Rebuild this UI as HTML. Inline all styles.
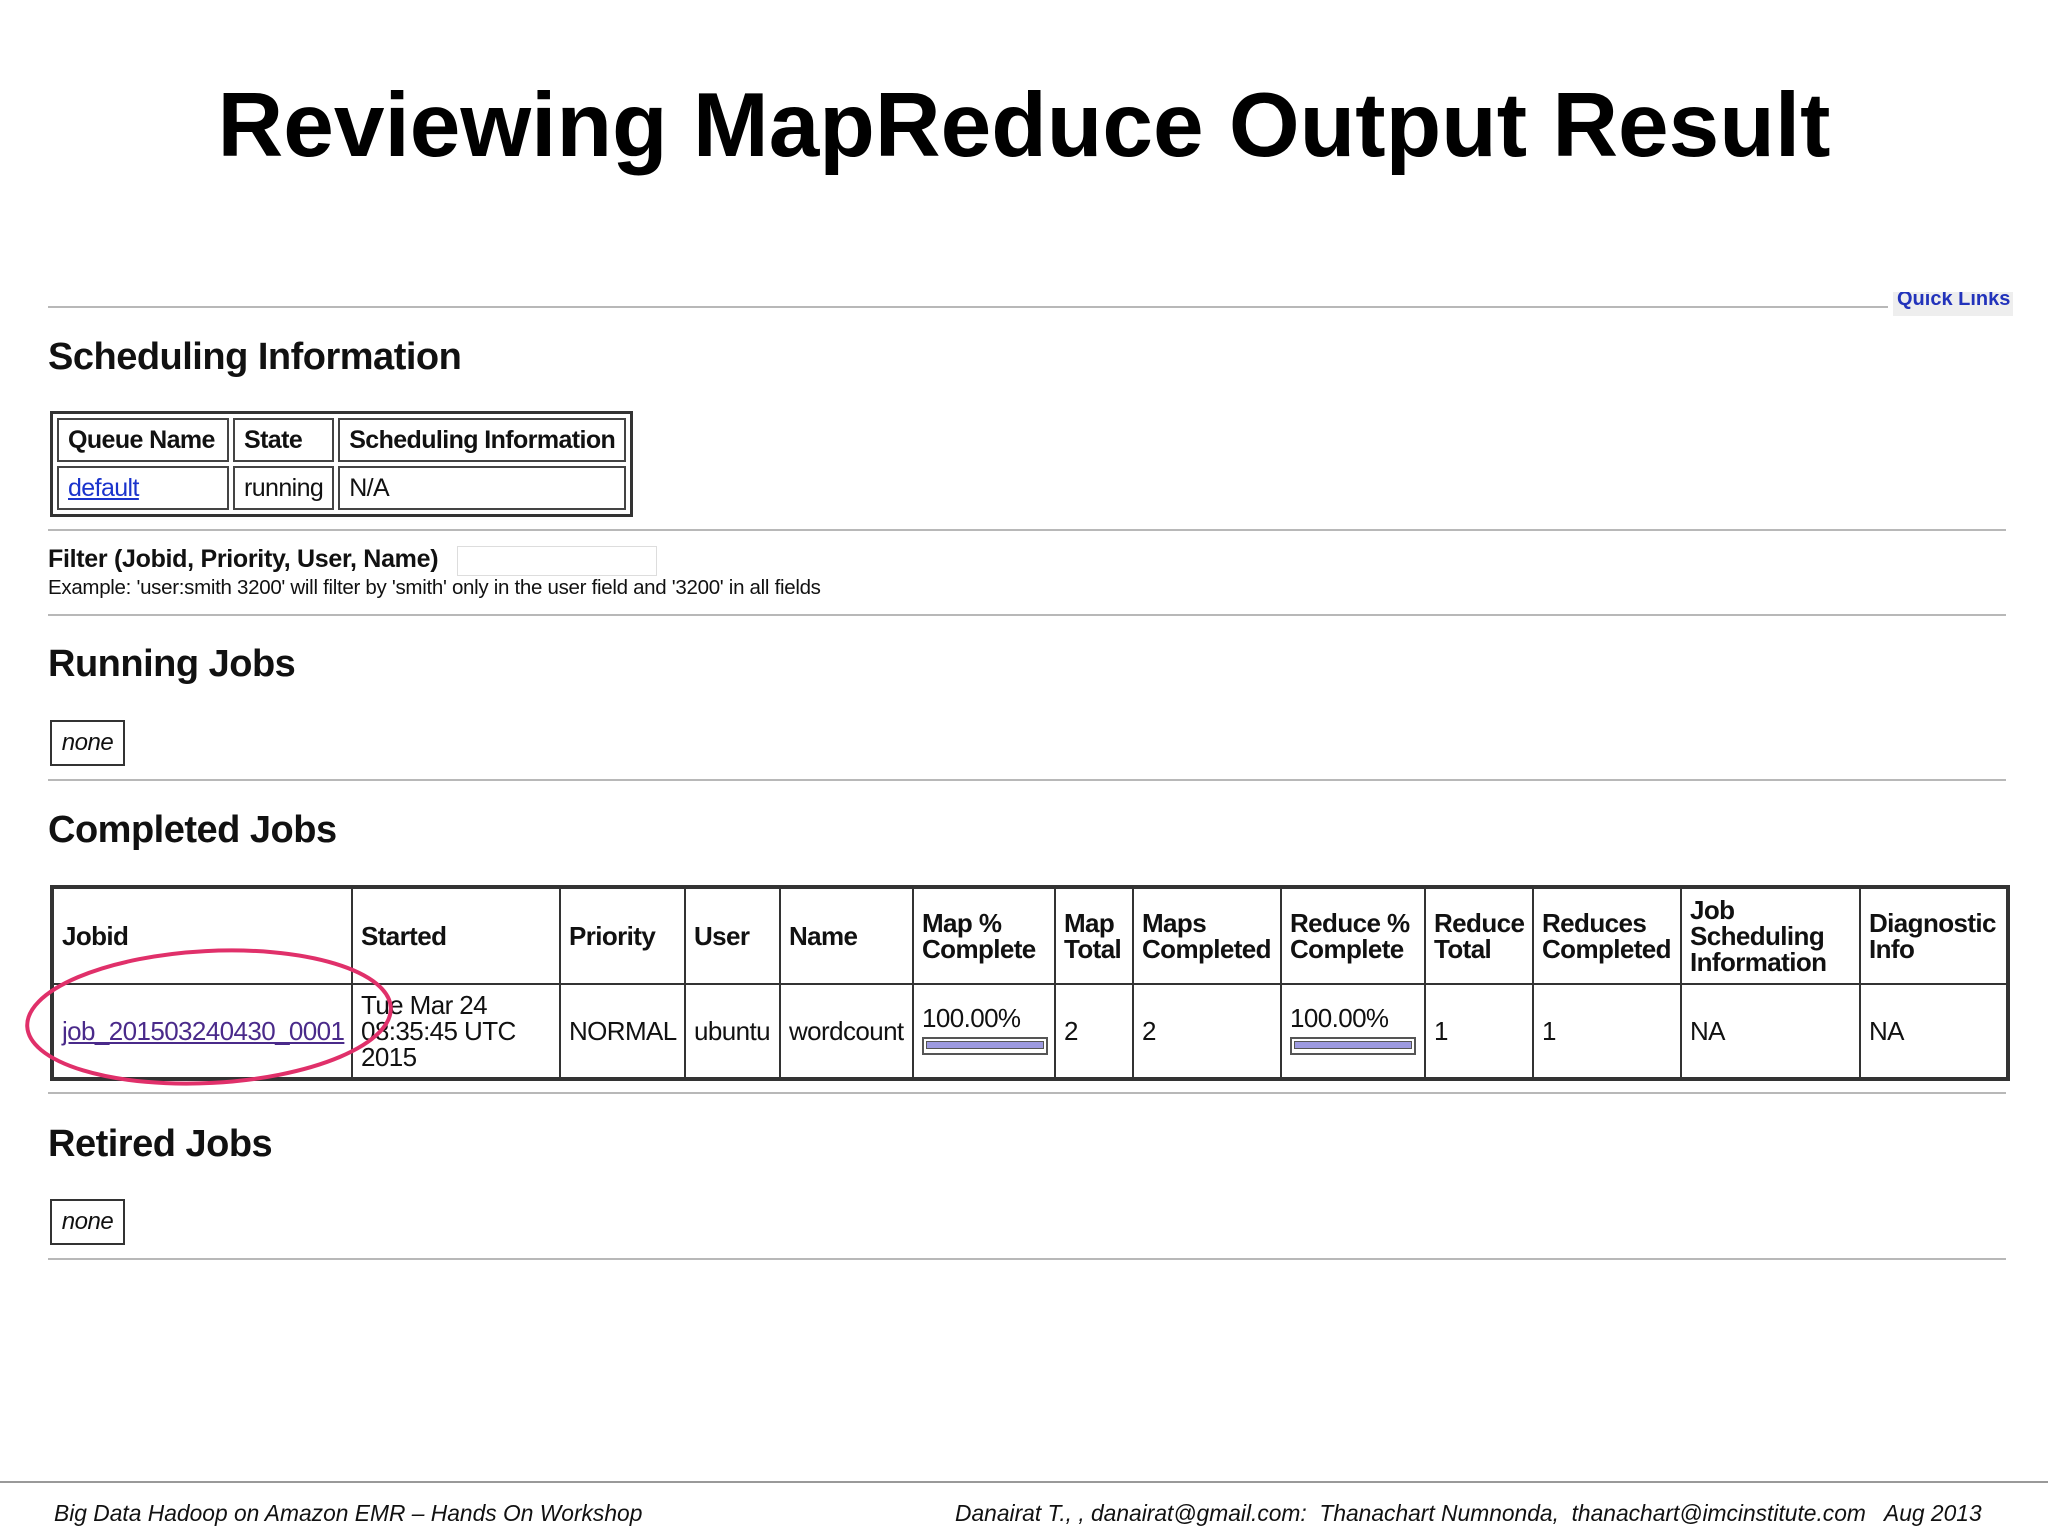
<!DOCTYPE html>
<html><head><meta charset="utf-8"><style>
body{margin:0;width:2048px;height:1536px;background:#fff;position:relative;overflow:hidden;font-family:"Liberation Sans",Arial,sans-serif;color:#111}
.a{position:absolute}
.hr{position:absolute;left:48px;height:2px;background:#b8b8b8}
h2{position:absolute;margin:0;font-size:38px;font-weight:bold;left:48px;line-height:1;letter-spacing:-0.5px}
.none{position:absolute;left:50px;width:71px;height:42px;border:2px solid #333;font-style:italic;font-size:24px;line-height:42px;text-align:center;box-sizing:content-box;letter-spacing:-0.5px}
table.s{position:absolute;left:50px;top:411px;border:3px solid #333;border-spacing:4px;font-size:25px;letter-spacing:-0.6px}
table.s td,table.s th{border:2px solid #444;padding:0 9px;height:40px;text-align:left;white-space:nowrap}
table.b{position:absolute;left:50px;top:885px;width:1956px;table-layout:fixed;border-collapse:collapse;border:4px solid #333;font-size:26px;letter-spacing:-0.6px}
table.b td,table.b th{border:2px solid #333;padding:0 8px;text-align:left;vertical-align:middle;line-height:26px;overflow:hidden}
table.b th{height:94px}
table.b td{height:92px}
table.b td.p{height:70px;vertical-align:top;padding-top:20px;padding-bottom:2px}
a{color:#1a33cc}
.bar{width:118px;height:10px;border:2px solid #555;margin-top:6px;padding:2px;background:#fff}
.bar div{height:6px;background:#9d9ae0;border:1px solid #555}
</style></head><body>
<div class="a" style="left:0;top:76px;width:2048px;text-align:center;font-size:91px;font-weight:bold;color:#000;line-height:100px">Reviewing MapReduce Output Result</div>
<div class="hr" style="top:306px;width:1840px"></div>
<div class="a" style="left:1893px;top:292px;width:120px;height:24px;background:#eee;overflow:hidden;white-space:nowrap"><div style="margin-top:-4px;font-size:20px;font-weight:bold;color:#2233bb;padding-left:4px">Quick Links</div></div>
<h2 style="top:338px;font-size:38px">Scheduling Information</h2>
<table class="s"><tr><th style="width:150px">Queue Name</th><th style="width:74px">State</th><th>Scheduling Information</th></tr>
<tr><td><a href="#">default</a></td><td>running</td><td>N/A</td></tr></table>
<div class="hr" style="top:529px;width:1958px"></div>
<div class="a" style="left:48px;top:545px;font-size:25px;font-weight:bold;letter-spacing:-0.3px">Filter (Jobid, Priority, User, Name)</div>
<div class="a" style="left:457px;top:546px;width:198px;height:28px;border:1px solid #ddd;background:#fff"></div>
<div class="a" style="left:48px;top:576px;font-size:20.5px;letter-spacing:-0.3px">Example: 'user:smith 3200' will filter by 'smith' only in the user field and '3200' in all fields</div>
<div class="hr" style="top:614px;width:1958px"></div>
<h2 style="top:645px">Running Jobs</h2>
<div class="none" style="top:720px">none</div>
<div class="hr" style="top:779px;width:1958px"></div>
<h2 style="top:811px">Completed Jobs</h2>
<table class="b"><colgroup><col style="width:300px"><col style="width:208px"><col style="width:125px"><col style="width:95px"><col style="width:133px"><col style="width:142px"><col style="width:78px"><col style="width:148px"><col style="width:144px"><col style="width:108px"><col style="width:148px"><col style="width:179px"><col style="width:148px"></colgroup>
<tr><th>Jobid</th><th>Started</th><th>Priority</th><th>User</th><th>Name</th><th>Map %<br>Complete</th><th>Map<br>Total</th><th>Maps<br>Completed</th><th>Reduce %<br>Complete</th><th>Reduce<br>Total</th><th>Reduces<br>Completed</th><th>Job<br>Scheduling<br>Information</th><th>Diagnostic<br>Info</th></tr>
<tr><td><a href="#" style="color:#4a2a8a">job_201503240430_0001</a></td><td>Tue Mar 24<br>08:35:45 UTC<br>2015</td><td>NORMAL</td><td>ubuntu</td><td>wordcount</td><td class="p">100.00%<div class="bar"><div></div></div></td><td>2</td><td>2</td><td class="p">100.00%<div class="bar"><div></div></div></td><td>1</td><td>1</td><td>NA</td><td>NA</td></tr></table>
<svg class="a" style="left:0;top:930px" width="420" height="180"><ellipse cx="209" cy="87" rx="182" ry="66" fill="none" stroke="#e0306a" stroke-width="4" transform="rotate(-3 209 87)"/></svg>
<div class="hr" style="top:1092px;width:1958px"></div>
<h2 style="top:1125px">Retired Jobs</h2>
<div class="none" style="top:1199px">none</div>
<div class="hr" style="top:1258px;width:1958px"></div>
<div class="a" style="left:0;top:1481px;width:2048px;height:2px;background:#999"></div>
<div class="a" style="left:54px;top:1500px;font-size:22.8px;font-style:italic">Big Data Hadoop on Amazon EMR – Hands On Workshop</div>
<div class="a" style="left:955px;top:1500px;font-size:22.8px;font-style:italic;white-space:pre">Danairat T., , danairat@gmail.com:  Thanachart Numnonda,  thanachart@imcinstitute.com   Aug 2013</div>
</body></html>
